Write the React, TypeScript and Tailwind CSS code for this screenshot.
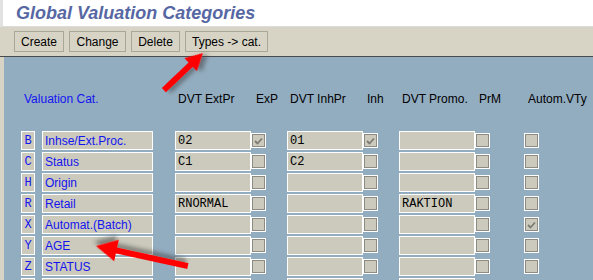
import React from "react";

type Row = {
  key: string;
  name: string;
  ext: string;
  exp: boolean;
  inh: string;
  inhC: boolean;
  promo: string;
  prm: boolean;
  auto: boolean;
};

const rows: Row[] = [
  { key: "B", name: "Inhse/Ext.Proc.", ext: "02", exp: true, inh: "01", inhC: true, promo: "", prm: false, auto: false },
  { key: "C", name: "Status", ext: "C1", exp: false, inh: "C2", inhC: false, promo: "", prm: false, auto: false },
  { key: "H", name: "Origin", ext: "", exp: false, inh: "", inhC: false, promo: "", prm: false, auto: false },
  { key: "R", name: "Retail", ext: "RNORMAL", exp: false, inh: "", inhC: false, promo: "RAKTION", prm: false, auto: false },
  { key: "X", name: "Automat.(Batch)", ext: "", exp: false, inh: "", inhC: false, promo: "", prm: false, auto: true },
  { key: "Y", name: "AGE", ext: "", exp: false, inh: "", inhC: false, promo: "", prm: false, auto: false },
  { key: "Z", name: "STATUS", ext: "", exp: false, inh: "", inhC: false, promo: "", prm: false, auto: false },
  { key: "", name: "", ext: "", exp: false, inh: "", inhC: false, promo: "", prm: false, auto: false },
];

const sans = "font-['Liberation_Sans',Arial,sans-serif]";
const mono = "font-['Liberation_Mono','Courier_New',monospace]";

function Check({ on }: { on: boolean }) {
  return (
    <div className="w-[15px] h-[15px] border border-white flex-none">
      <div className="w-full h-full border border-[#8c8c84] bg-[#cbcabc] flex items-center justify-center">
        {on && (
          <svg width="9" height="8" viewBox="0 0 9 8">
            <path d="M1 4 L3.5 6.5 L8 1.5" stroke="#7c7c74" strokeWidth="1.8" fill="none" />
          </svg>
        )}
      </div>
    </div>
  );
}

function Field({ value, w, className = "" }: { value: string; w: string; className?: string }) {
  return (
    <div className={`${w} h-[19px] border border-white bg-[#cbcabc] flex items-center pl-[2px] text-[12px] text-black ${mono} ${className}`}>
      {value}
    </div>
  );
}

function Btn({ label, w }: { label: string; w: string }) {
  return (
    <button className={`${w} h-[21px] border border-[#a9a798] bg-[#d7d4c6] text-[12px] text-black leading-none`}>
      {label}
    </button>
  );
}

function Arrow({ x, y, angle, len, head, half, thick }: { x: number; y: number; angle: number; len: number; head: number; half: number; thick: number }) {
  return (
    <g transform={`translate(${x} ${y}) rotate(${angle})`} filter="url(#sh)">
      <rect x={-len} y={-thick / 2} width={len - head + 1} height={thick} fill="#ff0000" />
      <polygon points={`0,0 ${-head},${-half} ${-head},${half}`} fill="#ff0000" />
    </g>
  );
}

export default function App() {
  return (
    <div className={`relative w-[593px] h-[280px] overflow-hidden bg-[#d7d4c6] ${sans}`}>
      <div className="h-[27px] bg-white border-l-[3px] border-l-[#e2e2e2] border-b border-b-[#dcdcdc] flex items-center pl-[13px]">
        <h1 className="text-[18px] font-bold italic text-[#5767a3] leading-none">Global Valuation Categories</h1>
      </div>

      <div className="h-[30px] flex items-center gap-[5px] pl-[14px] border-b border-b-[#4a4a4a]">
        <Btn label="Create" w="w-[50px]" />
        <Btn label="Change" w="w-[57px]" />
        <Btn label="Delete" w="w-[49px]" />
        <Btn label="Types -> cat." w="w-[83px]" />
      </div>

      <div className="ml-[4px] h-[223px] bg-[#93adc0] pt-[34px]">
        <div className="flex items-center h-[16px] text-[12px] text-black">
          <span className="ml-[20px] w-[154px] text-[#1414f0]">Valuation Cat.</span>
          <span className="w-[78px]">DVT ExtPr</span>
          <span className="w-[34px]">ExP</span>
          <span className="w-[77px]">DVT InhPr</span>
          <span className="w-[35px]">Inh</span>
          <span className="w-[77px]">DVT Promo.</span>
          <span className="w-[49px]">PrM</span>
          <span>Autom.VTy</span>
        </div>

        <div className="mt-[24px] flex flex-col gap-[2px]">
          {rows.map((r, i) => (
            <div key={i} className="flex items-center h-[19px]">
              <div className={`ml-[17px] w-[14px] h-[19px] border border-white bg-[#cbcabc] flex items-center justify-center text-[12px] text-[#1414f0] ${mono}`}>
                {r.key}
              </div>
              <div className="ml-[7px] w-[111px] h-[19px] border border-white bg-[#cbcabc] flex items-center pl-[2px] text-[12px] text-[#1414f0]">
                {r.name}
              </div>
              <Field value={r.ext} w="w-[76px]" className="ml-[22px]" />
              <Check on={r.exp} />
              <Field value={r.inh} w="w-[76px]" className="ml-[21px]" />
              <Check on={r.inhC} />
              <Field value={r.promo} w="w-[76px]" className="ml-[21px]" />
              <Check on={r.prm} />
              <div className="ml-[34px]">
                <Check on={r.auto} />
              </div>
            </div>
          ))}
        </div>
      </div>

      <svg className="absolute inset-0 pointer-events-none" width="593" height="280">
        <defs>
          <filter id="sh" x="-50%" y="-50%" width="200%" height="200%">
            <feDropShadow dx="3" dy="4" stdDeviation="2" floodColor="#404040" floodOpacity="0.55" />
          </filter>
        </defs>
        <Arrow x={203} y={53} angle={-43.5} len={54} head={17} half={9} thick={6} />
        <Arrow x={96} y={246} angle={-167.7} len={94} head={21} half={11} thick={6} />
      </svg>
    </div>
  );
}
